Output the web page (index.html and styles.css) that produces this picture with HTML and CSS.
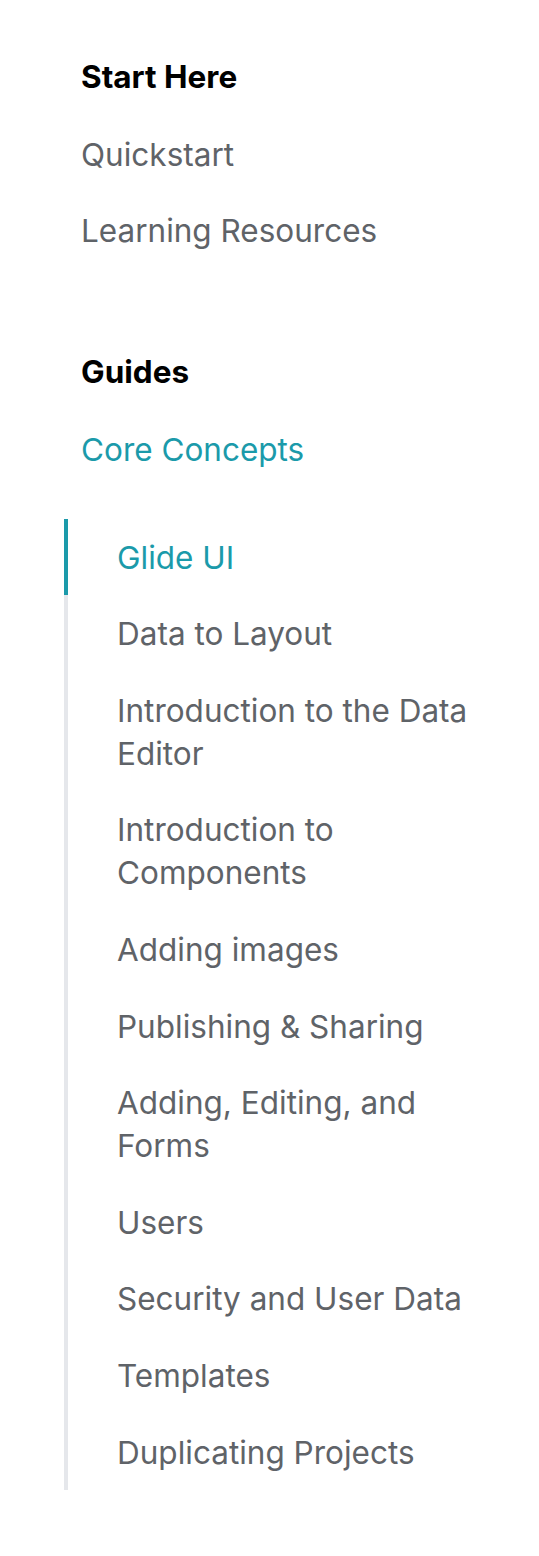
FILE: index.html
```html
<!DOCTYPE html>
<html lang="en">
<head>
    <meta charset="UTF-8">
    <meta name="viewport" content="width=device-width, initial-scale=1.0">
    <title>Docs Sidebar</title>
    <link rel="stylesheet" href="styles.css">
</head>
<body>
    <nav class="sidebar">
        <div class="nav-section">
            <h4 class="nav-title">Start Here</h4>
            <a class="nav-link" href="#">Quickstart</a>
            <a class="nav-link" href="#">Learning Resources</a>
        </div>
        <div class="nav-section">
            <h4 class="nav-title">Guides</h4>
            <a class="nav-link active" href="#">Core Concepts</a>
            <div class="sub-nav">
                <a class="nav-link active" href="#">Glide UI</a>
                <a class="nav-link" href="#">Data to Layout</a>
                <a class="nav-link" href="#">Introduction to the Data Editor</a>
                <a class="nav-link" href="#">Introduction to Components</a>
                <a class="nav-link" href="#">Adding images</a>
                <a class="nav-link" href="#">Publishing &amp; Sharing</a>
                <a class="nav-link" href="#">Adding, Editing, and Forms</a>
                <a class="nav-link" href="#">Users</a>
                <a class="nav-link" href="#">Security and User Data</a>
                <a class="nav-link" href="#">Templates</a>
                <a class="nav-link" href="#">Duplicating Projects</a>
            </div>
        </div>
    </nav>
</body>
</html>
```

FILE: styles.css
```css
:root {
    --accent: #1b9aaa;
    --text: #5f6368;
    --heading: #000;
    --rail: #e5e7eb;
}

body {
    margin: 0;
    padding: 0;
    background: #fff;
    font-family: Inter, "Noto Sans", sans-serif;
}

.sidebar {
    width: 421px;
    padding: 38px 0 60px 81px;
}

.nav-section + .nav-section {
    margin-top: 64px;
}

.nav-title {
    margin: 0;
    padding: 17px 0 18px;
    font-size: 31.5px;
    line-height: 43px;
    font-weight: 700;
    color: var(--heading);
}

.nav-link {
    display: block;
    padding: 16.8px 0;
    font-size: 31.5px;
    line-height: 43px;
    color: var(--text);
    text-decoration: none;
}

.nav-link.active {
    color: var(--accent);
}

/* nested pages hang off a grey rail */
.sub-nav {
    margin: 31px 0 0 -17px;
    border-left: 4px solid var(--rail);
}

.sub-nav .nav-link {
    margin-left: -4px;
    padding-left: 49px;
    border-left: 4px solid transparent;
}

.sub-nav .nav-link.active {
    border-left-color: var(--accent);
}
```
